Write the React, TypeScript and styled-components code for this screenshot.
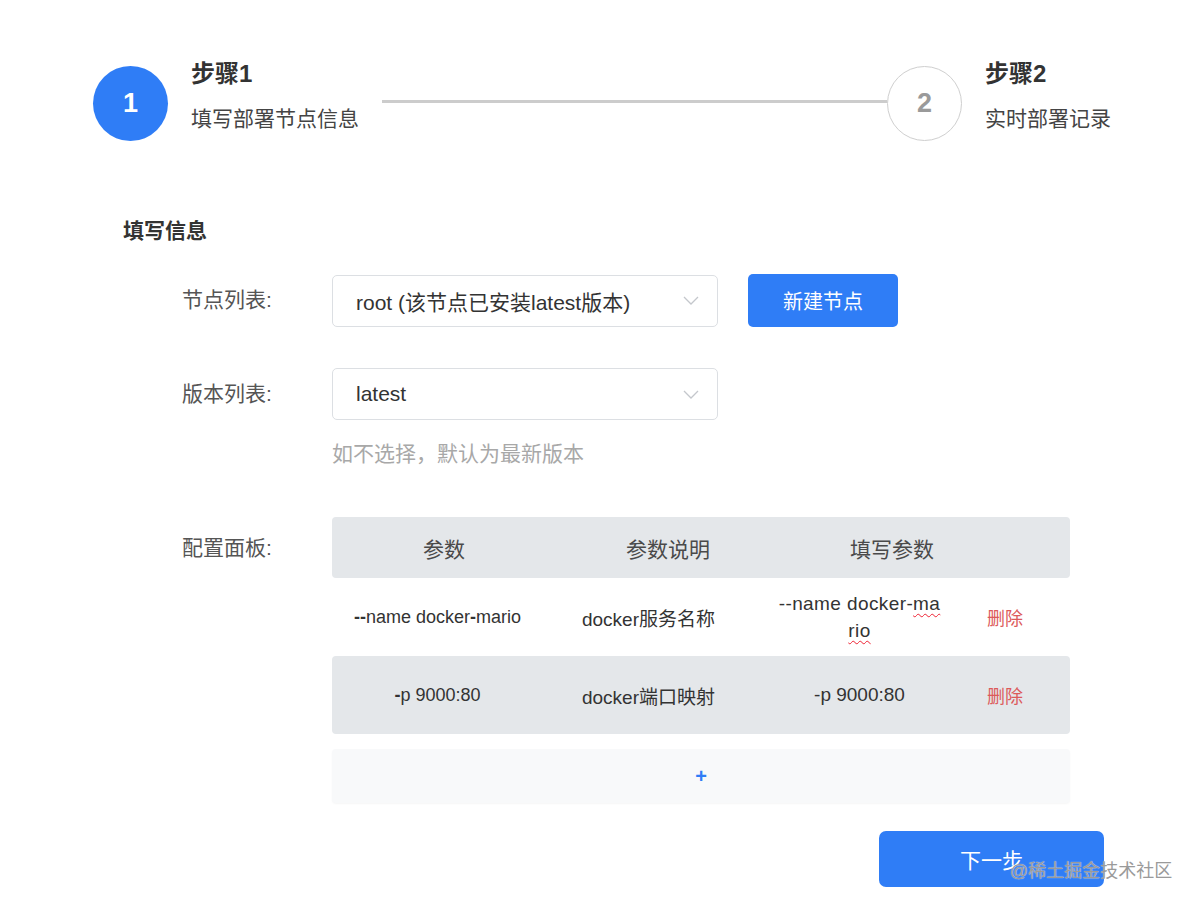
import React from "react";
import styled, { createGlobalStyle } from "styled-components";

const Global = createGlobalStyle`
  html, body { margin: 0; padding: 0; background: #fff; }
  body { font-family: "Liberation Sans", "Noto Sans CJK SC", sans-serif; color: #333; }
  * { box-sizing: border-box; }
`;

const BLUE = "#2f7df6";

const Page = styled.div`
  position: relative;
  width: 1197px;
  height: 906px;
  overflow: hidden;
  display: flex;
  flex-direction: column;
`;

const Steps = styled.div`
  display: flex;
  align-items: flex-start;
  padding: 59px 86px 0 93px;
`;

const Step = styled.div`
  display: flex;
  align-items: flex-start;
  gap: 23px;
`;

const Circle = styled.div<{ $active?: boolean }>`
  margin-top: 7px;
  width: 75px;
  height: 75px;
  border-radius: 50%;
  display: flex;
  align-items: center;
  justify-content: center;
  font-family: "Liberation Sans", Arial, sans-serif;
  font-weight: 700;
  font-size: 27px;
  background: ${(p) => (p.$active ? BLUE : "#fff")};
  color: ${(p) => (p.$active ? "#fff" : "#9a9a9a")};
  border: ${(p) => (p.$active ? "none" : "1px solid #cfcfcf")};
`;

const StepText = styled.div`
  display: flex;
  flex-direction: column;
`;

const StepTitle = styled.div`
  font-size: 24px;
  line-height: 30px;
  font-weight: 700;
  color: #333;
`;

const StepSub = styled.div`
  margin-top: 17px;
  font-size: 21px;
  line-height: 26px;
  color: #444;
`;

const Connector = styled.div`
  flex: 1;
  height: 3px;
  margin: 41px 0 0 23px;
  background: #cccccc;
`;

const Form = styled.div`
  display: flex;
  flex-direction: column;
  padding: 77px 0 0 123px;
`;

const SectionTitle = styled.div`
  font-size: 21px;
  line-height: 26px;
  font-weight: 700;
  color: #333;
  margin-bottom: 30px;
`;

const Row = styled.div<{ $mt?: number }>`
  display: flex;
  align-items: flex-start;
  margin-top: ${(p) => p.$mt ?? 0}px;
`;

const Label = styled.div<{ $h: number }>`
  width: 209px;
  padding-left: 59px;
  height: ${(p) => p.$h}px;
  line-height: ${(p) => p.$h}px;
  font-size: 21px;
  color: #555;
  flex-shrink: 0;
`;

const Control = styled.div`
  display: flex;
  flex-direction: column;
`;

const Inline = styled.div`
  display: flex;
  align-items: center;
  gap: 30px;
`;

const Select = styled.div`
  width: 386px;
  height: 52px;
  border: 1px solid #dcdfe3;
  border-radius: 5px;
  display: flex;
  align-items: center;
  justify-content: space-between;
  padding: 0 18px 0 23px;
  font-size: 21px;
  color: #333;
`;

const Button = styled.button<{ $w: number; $h: number; $r: number; $fs: number }>`
  width: ${(p) => p.$w}px;
  height: ${(p) => p.$h}px;
  border-radius: ${(p) => p.$r}px;
  border: none;
  background: ${BLUE};
  color: #fff;
  font-family: "Liberation Sans", "Noto Sans CJK SC", sans-serif;
  font-size: ${(p) => p.$fs}px;
  padding: 0;
  cursor: pointer;
`;

const Hint = styled.div`
  margin-top: 21px;
  font-size: 21px;
  line-height: 26px;
  color: #a8a8a8;
`;

const Table = styled.div`
  width: 738px;
  display: flex;
  flex-direction: column;
`;

const HeadRow = styled.div`
  display: grid;
  grid-template-columns: 224px 224px 224px 1fr;
  height: 61px;
  align-items: center;
  background: #e4e7ea;
  border-radius: 4px;
  font-size: 21px;
  color: #4a4a4a;
`;

const HeadCell = styled.div`
  text-align: center;
`;

const BodyRow = styled.div<{ $alt?: boolean }>`
  display: grid;
  grid-template-columns: 211px 211px 211px 1fr;
  height: 78px;
  align-items: center;
  background: ${(p) => (p.$alt ? "#e4e7ea" : "#fff")};
  border-radius: 4px;
  color: #333;
`;

const Cell = styled.div<{ $fs?: number }>`
  text-align: center;
  font-size: ${(p) => p.$fs ?? 19}px;
  white-space: nowrap;
`;

const Wrapped = styled.div`
  width: 172px;
  margin: 0 auto;
  text-align: center;
  font-size: 19px;
  line-height: 27px;
  letter-spacing: 0.4px;
  white-space: normal;
  word-break: break-all;
`;

const Spell = styled.span`
  text-decoration: underline wavy #e23;
  text-decoration-thickness: 1px;
  text-underline-offset: 3px;
`;

const Delete = styled.div`
  padding-left: 22px;
  font-size: 18px;
  color: #dc5a5a;
`;

const AddRow = styled.div`
  margin-top: 15px;
  height: 54px;
  background: #f8f9fa;
  border-radius: 4px;
  box-shadow: 0 1px 2px rgba(0, 0, 0, 0.04);
  display: flex;
  align-items: center;
  justify-content: center;
  color: ${BLUE};
  font-size: 20px;
  font-weight: 700;
`;

const Footer = styled.div`
  display: flex;
  justify-content: flex-end;
  padding: 28px 93px 0 0;
`;

const Watermark = styled.div`
  position: absolute;
  left: 1010px;
  top: 859px;
  font-size: 18px;
  line-height: 24px;
  color: #9a9a9a;
  text-shadow: 0 0 1px rgba(255, 255, 255, 0.9);
  pointer-events: none;
`;

const Chevron = () => (
  <svg width="16" height="9" viewBox="0 0 16 9" fill="none">
    <path d="M1 1l7 7 7-7" stroke="#c4c7cc" strokeWidth="1.3" />
  </svg>
);

export default function App() {
  return (
    <Page>
      <Global />
      <Steps>
        <Step>
          <Circle $active>1</Circle>
          <StepText>
            <StepTitle>步骤1</StepTitle>
            <StepSub>填写部署节点信息</StepSub>
          </StepText>
        </Step>
        <Connector />
        <Step>
          <Circle>2</Circle>
          <StepText>
            <StepTitle>步骤2</StepTitle>
            <StepSub>实时部署记录</StepSub>
          </StepText>
        </Step>
      </Steps>

      <Form>
        <SectionTitle>填写信息</SectionTitle>
        <Row>
          <Label $h={52}>节点列表:</Label>
          <Inline>
            <Select>
              <span>root (该节点已安装latest版本)</span>
              <Chevron />
            </Select>
            <Button $w={150} $h={53} $r={5} $fs={20}>新建节点</Button>
          </Inline>
        </Row>
        <Row $mt={41}>
          <Label $h={52}>版本列表:</Label>
          <Control>
            <Select>
              <span>latest</span>
              <Chevron />
            </Select>
            <Hint>如不选择，默认为最新版本</Hint>
          </Control>
        </Row>
        <Row $mt={50}>
          <Label $h={61}>配置面板:</Label>
          <Table>
            <HeadRow>
              <HeadCell>参数</HeadCell>
              <HeadCell>参数说明</HeadCell>
              <HeadCell>填写参数</HeadCell>
              <HeadCell />
            </HeadRow>
            <BodyRow>
              <Cell $fs={18}>
                <b>--</b>name docker<b>-</b>mario
              </Cell>
              <Cell>docker服务名称</Cell>
              <Wrapped>
                --name docker-<Spell>ma</Spell>
                <br />
                <Spell>rio</Spell>
              </Wrapped>
              <Delete>删除</Delete>
            </BodyRow>
            <BodyRow $alt>
              <Cell $fs={18}>
                <b>-</b>p 9000:80
              </Cell>
              <Cell>docker端口映射</Cell>
              <Cell>-p 9000:80</Cell>
              <Delete>删除</Delete>
            </BodyRow>
            <AddRow>+</AddRow>
          </Table>
        </Row>
      </Form>

      <Footer>
        <Button $w={225} $h={56} $r={7} $fs={21}>下一步</Button>
      </Footer>
      <Watermark>@稀土掘金技术社区</Watermark>
    </Page>
  );
}
